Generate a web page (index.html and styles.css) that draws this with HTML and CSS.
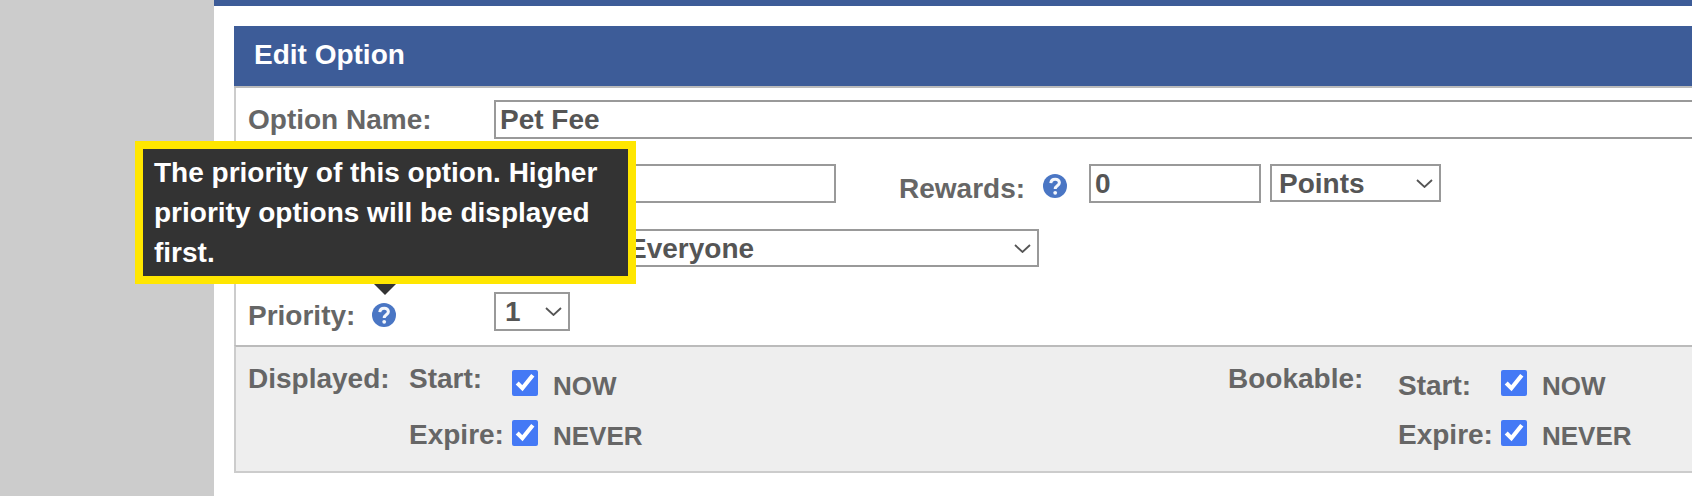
FILE: index.html
```html
<!DOCTYPE html>
<html lang="en">
<head>
  <meta charset="UTF-8" />
  <title>Edit Option</title>
  <link rel="stylesheet" href="styles.css">
</head>
<body>
  <div class="page">
    <div class="sidebar"></div>
    <div class="main">
      <div class="panel">
        <div class="panel-title">Edit Option</div>
        <div class="fields">
          <div class="row">
            <label class="label">Option Name:</label>
            <input class="text name-input" type="text" value="Pet Fee">
          </div>
          <div class="row">
            <div class="label"></div>
            <input class="text price-input" type="text" value="">
            <label class="rewards-label">Rewards:</label>
            <svg class="help rewards-help" viewBox="0 0 24 24"><use href="#help-icon"/></svg>
            <input class="text rewards-input" type="text" value="0">
            <div class="select-wrap points-wrap">
              <select class="select"><option>Points</option></select>
              <svg class="chevron" viewBox="0 0 17 9"><path d="M1 1l7.500 7 7.500-7"/></svg>
            </div>
          </div>
          <div class="row row-mid">
            <div class="label"></div>
            <div class="select-wrap visible-wrap">
              <select class="select"><option>Everyone</option></select>
              <svg class="chevron" viewBox="0 0 17 9"><path d="M1 1l7.500 7 7.500-7"/></svg>
            </div>
          </div>
          <div class="row">
            <div class="label priority-label">
              <span>Priority:</span>
              <svg class="help" viewBox="0 0 24 24">
                <symbol id="help-icon" viewBox="0 0 24 24">
                  <circle cx="12" cy="12" r="12" fill="#4a76c4"/>
                  <path d="M7.800 9.200c.2-2.600 2-4 4.400-4 2.500 0 4.200 1.500 4.200 3.500 0 3-4.200 3.100-4.200 6.200" fill="none" stroke="#f4f7fc" stroke-width="3"/>
                  <circle cx="12.200" cy="18.800" r="1.900" fill="#f4f7fc"/>
                </symbol>
                <use href="#help-icon"/>
              </svg>
            </div>
            <div class="select-wrap priority-wrap">
              <select class="select"><option>1</option></select>
              <svg class="chevron" viewBox="0 0 17 9"><path d="M1 1l7.500 7 7.500-7"/></svg>
            </div>
          </div>
        </div>
        <div class="dates">
          <div class="dates-heading high">Displayed:</div>
          <div class="dates-label high">Start:</div>
          <input class="check" type="checkbox" checked>
          <div class="dates-value">NOW</div>
          <div class="dates-heading high">Bookable:</div>
          <div class="dates-label">Start:</div>
          <input class="check" type="checkbox" checked>
          <div class="dates-value">NOW</div>

          <div class="dates-label col-2 mid">Expire:</div>
          <input class="check" type="checkbox" checked>
          <div class="dates-value">NEVER</div>
          <div class="dates-label col-6 mid">Expire:</div>
          <input class="check" type="checkbox" checked>
          <div class="dates-value">NEVER</div>
        </div>
      </div>
    </div>
    <div class="tooltip">The priority of this option. Higher priority options will be displayed first.</div>
  </div>
</body>
</html>
```

FILE: styles.css
```css
body, html {
  margin: 0;
  padding: 0;
  height: 100%;
  overflow: hidden;
  background: #fff;
  font-family: "Liberation Sans", Arial, sans-serif;
  font-size: 28px;
  font-weight: bold;
  color: #666;
}
.page {
  position: relative;
  display: flex;
  height: 100vh;
}
.sidebar {
  width: 214px;
  flex: none;
  background: #ccc;
}
.main {
  flex: 1;
  min-width: 0;
  overflow: hidden;
  border-top: 6px solid #3d5c98;
  padding: 20px 0 0 20px;
}
.panel {
  width: 1500px;
}
.panel-title {
  height: 60px;
  line-height: 58px;
  padding-left: 20px;
  background: #3d5c98;
  color: #fff;
  border-bottom: 2px solid #bbb;
}
.fields {
  display: flex;
  flex-direction: column;
  gap: 25px;
  padding: 12px 0 14px 12px;
  border-left: 2px solid #ccc;
}
.row {
  display: flex;
  align-items: center;
  height: 39px;
}
.row-mid {
  height: 38px;
  margin-top: 1px;
}
.label {
  width: 246px;
  flex: none;
}
.rewards-label {
  margin-left: 63px;
  padding-top: 11px;
}
.priority-label {
  display: flex;
  align-items: center;
  gap: 17px;
  padding-top: 9px;
}
.priority-label .help {
  margin-top: -3px;
}
.text, .select {
  box-sizing: border-box;
  height: 39px;
  margin: 0;
  padding: 0 4px;
  border: 2px solid #999;
  border-radius: 0;
  background: #fff;
  outline: none;
  font: inherit;
  color: #555;
}
.name-input {
  width: 1300px;
}
.price-input {
  width: 342px;
}
.help {
  width: 24px;
  height: 24px;
  flex: none;
}
.rewards-help {
  margin: 4px 22px 0 18px;
}
.rewards-input {
  width: 172px;
}
.select-wrap {
  position: relative;
  display: flex;
}
.select {
  width: 100%;
  appearance: none;
}
.points-wrap {
  width: 171px;
  height: 38px;
  margin: -1px 0 0 9px;
}
.points-wrap .select {
  height: 38px;
  padding-left: 7px;
}
.visible-wrap {
  width: 545px;
  height: 38px;
}
.visible-wrap .select {
  height: 38px;
  padding-left: 132px;
}
.priority-wrap {
  width: 76px;
}
.priority-wrap .select {
  padding-left: 9px;
}
.chevron {
  position: absolute;
  right: 8px;
  top: 15px;
  width: 17px;
  height: 9px;
  fill: none;
  stroke: #555;
  stroke-width: 1.800;
  pointer-events: none;
}
.dates {
  display: grid;
  grid-template-columns: 161px 103px 41px 675px 170px 103px 41px auto;
  grid-auto-rows: 26px;
  row-gap: 24px;
  padding: 23px 0 25px 12px;
  background: #eee;
  border: 0 solid #ccc;
  border-width: 2px 0 2px 2px;
  border-top-color: #bbb;
}
.dates > div {
  line-height: 32px;
  white-space: nowrap;
}
.high {
  margin-top: -7px;
}
.mid {
  margin-top: -1px;
}
.dates-value {
  font-size: 26px;
}
.col-2 {
  grid-column: 2;
}
.col-6 {
  grid-column: 6;
}
.check {
  width: 26px;
  height: 26px;
  margin: 0;
  accent-color: #4479f5;
}
.tooltip {
  position: absolute;
  left: 135px;
  top: 141px;
  width: 501px;
  box-sizing: border-box;
  padding: 4px 11px 3px;
  border: 8px solid #ffe600;
  background: #333;
  color: #fff;
  line-height: 40px;
}
.tooltip::after {
  content: "";
  position: absolute;
  left: 231px;
  top: 100%;
  margin-top: 8px;
  border: 11px solid transparent;
  border-bottom: 0;
  border-top-color: #333;
}
```
